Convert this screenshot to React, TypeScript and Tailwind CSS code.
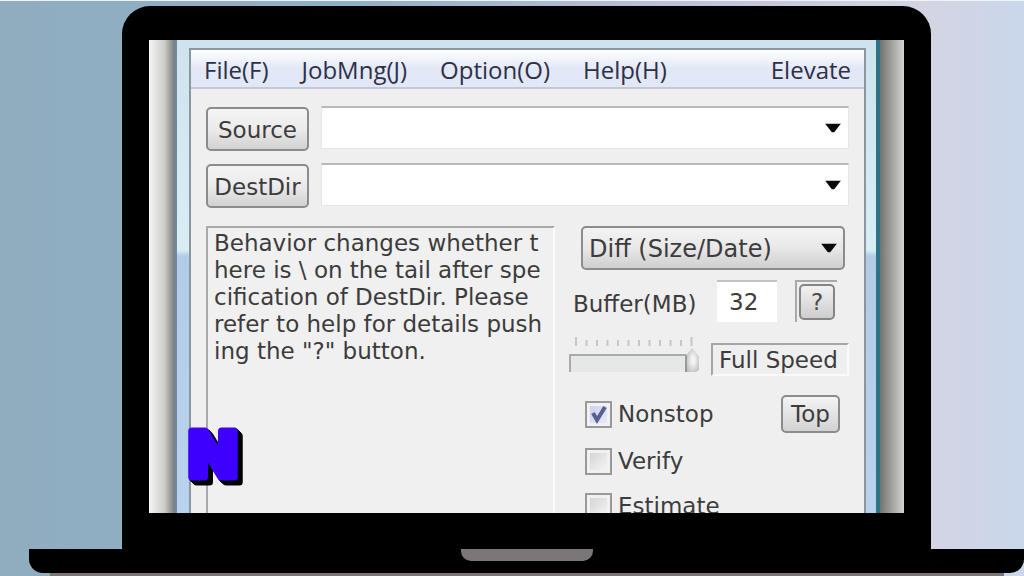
import { useState } from "react";

const menus = ["File(F)", "JobMng(J)", "Option(O)", "Help(H)"];
const modes = ["Diff (Size/Date)", "Copy (Overwrite)", "Sync (Size/Date)"];
const message =
  'Behavior changes whether t\nhere is \\ on the tail after spe\ncification of DestDir. Please\nrefer to help for details push\ning the "?" button.';

function Arrow() {
  return (
    <svg
      viewBox="0 0 16 9"
      className="pointer-events-none absolute right-2 top-1/2 h-[9px] w-4 -translate-y-1/2"
    >
      <path d="M0 0H16L9 9H7Z" fill="#0a0a0a" />
    </svg>
  );
}

function PathRow({ label }: { label: string }) {
  return (
    <div className="flex items-start gap-3">
      <button className="mt-px h-11 w-[103px] shrink-0 rounded-[5px] border-2 border-[#8c8c8c] bg-linear-to-b from-[#f4f4f4] via-[#ebebeb] to-[#d2d2d2] pt-[3px] text-[23px]">
        {label}
      </button>
      <div className="relative flex-1">
        <select
          aria-label={`${label} path`}
          className="h-[43px] w-full appearance-none border border-t-2 border-[#e6e6e6] border-t-[#b9b9b9] bg-white px-2"
        >
          <option></option>
        </select>
        <Arrow />
      </div>
    </div>
  );
}

function CheckRow({ label, initial = false }: { label: string; initial?: boolean }) {
  const [checked, setChecked] = useState(initial);
  return (
    <label className="flex items-center gap-[6px] text-[23px] leading-7">
      <span className="relative size-[27px]">
        <input
          type="checkbox"
          checked={checked}
          onChange={(e) => setChecked(e.target.checked)}
          className="block size-full appearance-none border-2 border-[#999999] bg-linear-to-br from-[#cfcfcf] to-[#fafafa] shadow-[inset_0_0_0_3px_#f1f1f1] checked:from-[#c9cdea] checked:to-[#eeeef8]"
        />
        {checked && (
          <svg viewBox="0 0 27 27" fill="none" className="pointer-events-none absolute inset-0">
            <path d="M8 12L12 19L20 6" stroke="#5a5f92" strokeWidth="4" />
          </svg>
        )}
      </span>
      {label}
    </label>
  );
}

function SpeedSlider() {
  return (
    <div className="w-[130px] shrink-0">
      <svg viewBox="0 0 130 11" className="block h-[11px] w-full">
        {Array.from({ length: 12 }, (_, i) => (
          <rect
            key={i}
            x={6 + i * 10.5}
            y={i === 0 || i === 11 ? 0 : 3}
            width="2"
            height={i === 0 || i === 11 ? 9 : 6}
            fill="#c6c6c6"
          />
        ))}
      </svg>
      <input
        type="range"
        aria-label="Speed"
        min={0}
        max={11}
        defaultValue={11}
        className="block h-[25px] w-full appearance-none bg-transparent [&::-webkit-slider-runnable-track]:mt-[5px] [&::-webkit-slider-runnable-track]:h-[18px] [&::-webkit-slider-runnable-track]:bg-[linear-gradient(to_right,#aaaaaa_2px,transparent_2px),linear-gradient(#aaaaaa_2px,#e6e8e7_2px)] [&::-webkit-slider-runnable-track]:bg-[length:117px_100%] [&::-webkit-slider-runnable-track]:bg-no-repeat [&::-webkit-slider-thumb]:-mt-[6px] [&::-webkit-slider-thumb]:h-6 [&::-webkit-slider-thumb]:w-[14px] [&::-webkit-slider-thumb]:appearance-none [&::-webkit-slider-thumb]:border-l-2 [&::-webkit-slider-thumb]:border-[#999999] [&::-webkit-slider-thumb]:bg-[radial-gradient(#f2f2f2_20%,#b4b4b4)] [&::-webkit-slider-thumb]:[clip-path:polygon(50%_0,100%_35%,100%_90%,80%_100%,0_100%,0_35%)]"
      />
    </div>
  );
}

function Settings() {
  return (
    <div className="w-[280px] shrink-0">
      <div className="relative ml-3 mr-1">
        <select
          aria-label="Copy mode"
          className="h-11 w-full appearance-none rounded-[5px] border-2 border-[#8c8c8c] bg-linear-to-b from-[#f3f3f3] via-[#e8e8e8] to-[#cfcfcf] px-[6px] pt-[2px] text-[24px]"
        >
          {modes.map((m) => (
            <option key={m}>{m}</option>
          ))}
        </select>
        <Arrow />
      </div>

      <div className="ml-1 mt-[10px] flex">
        <label htmlFor="buffer" className="w-36 shrink-0 pt-[10px] text-[23px] leading-7">
          Buffer(MB)
        </label>
        <input
          id="buffer"
          defaultValue="32"
          className="h-[42px] w-[60px] border-t-2 border-[#c4c4c4] bg-white pl-3 text-[23px]"
        />
        <div className="ml-[18px] size-[42px] border-l-2 border-t-2 border-[#a9a9a9] p-[2px]">
          <button className="size-9 rounded-[5px] border-2 border-[#858585] bg-linear-to-b from-[#f1f1f1] to-[#cecece] text-[23px] leading-8 text-[#4a4a4a]">
            ?
          </button>
        </div>
      </div>

      <div className="mt-[15px] flex items-start">
        <SpeedSlider />
        <div className="ml-3 mt-[6px] flex-1 whitespace-nowrap border-2 border-[#fafafa] border-l-[#a5a5a5] border-t-[#a5a5a5] pl-[6px] pt-px text-[23px] leading-7">
          Full Speed
        </div>
      </div>

      <div className="ml-4 mr-[9px] mt-[19px] flex items-center justify-between">
        <CheckRow label="Nonstop" initial />
        <button className="h-[38px] w-[59px] rounded-[5px] border-2 border-[#8c8c8c] bg-linear-to-b from-[#f4f4f4] to-[#d2d2d2] text-[23px]">
          Top
        </button>
      </div>
      <div className="ml-4 mt-[14px] flex flex-col gap-[17px]">
        <CheckRow label="Verify" />
        <CheckRow label="Estimate" />
      </div>
    </div>
  );
}

function AppWindow() {
  return (
    <div className="flex min-w-0 flex-1 flex-col border-x-2 border-t-2 border-[#8b969f] bg-[#efefef]">
      <nav className="flex h-[39px] shrink-0 items-center border-b-2 border-[#c3c8d6] bg-linear-to-b from-white via-[#e2e8f6] via-50% to-[#e3e8f8] pl-[13px] pr-[13px] pt-[3px] font-['Open_Sans','Noto_Sans',sans-serif] text-[24px] text-[#2e3047]">
        <div className="flex flex-1 gap-[33px]">
          {menus.map((m) => (
            <button key={m}>{m}</button>
          ))}
        </div>
        <button>Elevate</button>
      </nav>
      <div className="flex min-h-0 flex-1 flex-col px-[15px] pt-[17px]">
        <div className="flex flex-col gap-3">
          <PathRow label="Source" />
          <PathRow label="DestDir" />
        </div>
        <div className="mt-[18px] flex min-h-0 flex-1 gap-[14px]">
          <textarea
            readOnly
            aria-label="Message"
            value={message}
            className="min-w-0 flex-1 resize-none overflow-hidden whitespace-pre border-x-2 border-t-2 border-[#a9a9a9] border-r-[#fafafa] bg-[#f0f0f0] pl-[6px] pt-[2px] text-[23px] leading-[27px] outline-none"
          />
          <Settings />
        </div>
      </div>
    </div>
  );
}

export default function App() {
  return (
    <main className="flex h-screen flex-col overflow-hidden border-t border-[#eef3f6] bg-[linear-gradient(to_right,#90adbf_0,#8eb0c6_35%,#b9bdd6_62%,#d4d4e4_91%,#c9d7ea_100%)] font-['DejaVu_Sans',Verdana,sans-serif] text-[#3c3c3c]">
      <div className="ml-[122px] mr-[93px] mt-[5px] flex min-h-0 flex-1 flex-col rounded-t-[28px] bg-black px-[27px] pb-9 pt-[34px]">
        <div className="relative flex min-h-0 flex-1 overflow-hidden bg-white">
          <div className="w-[26px] shrink-0 bg-linear-to-r from-[#f6f7f4] via-[#cbccc8] via-60% to-[#777a7a]" />
          <div className="flex min-w-0 flex-1 border-l-2 border-r-4 border-l-[#6d8aa0] border-r-[#2c7386] bg-[linear-gradient(to_bottom,#cfe3ef_0,#d8edf4_210px,#b3cce6_216px,#b9d3ee_100%)] pl-3 pr-[10px] pt-2">
            <AppWindow />
          </div>
          <div className="w-6 shrink-0 bg-linear-to-r from-[#73746f] to-[#d4d4d4]" />
          <svg
            viewBox="0 0 60 60"
            className="absolute bottom-[26px] left-9 size-[60px] [filter:drop-shadow(1px_1px_0_#000)_drop-shadow(2px_2px_0_#000)_drop-shadow(2px_2px_0_#000)]"
          >
            <text
              x="28"
              y="50"
              fontFamily="Inter, sans-serif"
              fontWeight="900"
              fontSize="63"
              strokeWidth="7"
              strokeLinejoin="round"
              textAnchor="middle"
              fill="#3d00ff"
              stroke="#3d00ff"
            >
              N
            </text>
          </svg>
        </div>
      </div>
      <div className="ml-[29px] flex h-6 shrink-0 justify-center rounded-b-[14px] bg-black">
        <div className="h-3 w-[132px] rounded-b-[10px] bg-[#7b7778]" />
      </div>
      <div className="ml-[50px] mr-5 h-[3px] shrink-0 bg-[#7b7778]" />
    </main>
  );
}
